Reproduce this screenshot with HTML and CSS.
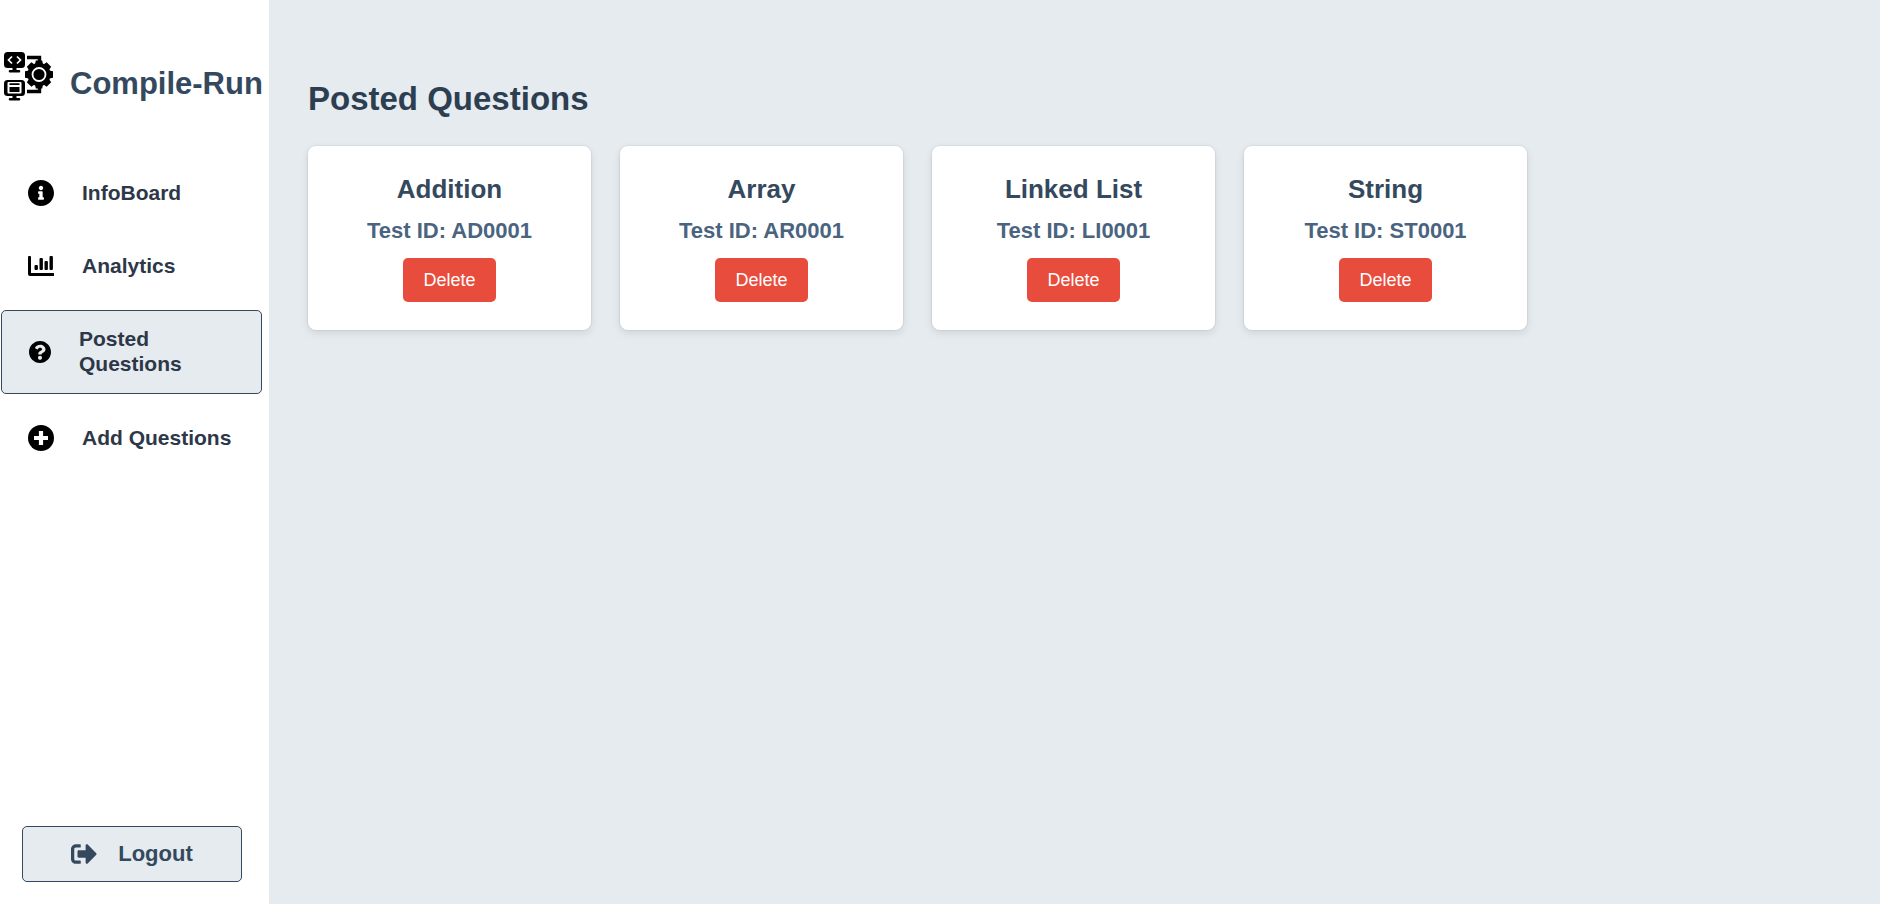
FILE: index.html
```html
<!DOCTYPE html>
<html lang="en">
<head>
<meta charset="utf-8">
<meta name="viewport" content="width=device-width, initial-scale=1">
<title>Compile-Run</title>
<link rel="stylesheet" href="styles.css">
</head>
<body>
<div class="app">
  <aside class="sidebar">
    <div class="brand">
      <svg class="brand-logo" viewBox="0 0 50 50" aria-hidden="true">
        <rect x="0" y="0" width="21" height="16" rx="3.5"/>
        <path d="M8.5 15h4v3h2.500a1.300 1.300 0 0 1 0 2.600h-9a1.300 1.300 0 0 1 0-2.600h2.500z"/>
        <path d="M8 4.500L4.500 8L8 11.500M13 4.500L16.500 8L13 11.500" fill="none" stroke="#fff" stroke-width="1.700"/>
        <rect x="0" y="28" width="21" height="16" rx="3.500"/>
        <path d="M8.500 43h4v3h2.500a1.300 1.300 0 0 1 0 2.600h-9a1.300 1.300 0 0 1 0-2.600h2.500z"/>
        <rect x="3.500" y="30" width="14" height="11.500" rx="1" fill="#fff"/>
        <path d="M5.500 31.300h10v1.700h-10zM5.500 35h10v5h-10z"/>
        <path d="M23 5.500h12.500v6M23 39.500h12.500v-6" fill="none" stroke="#000" stroke-width="3.400"/>
        <g transform="translate(35 22.500)">
          <circle r="11.500"/>
          <path d="M-3.200-14h6.400l1 5h-8.400zM-3.200 14h6.400l1-5h-8.400zM-14-3.200v6.400l5 1v-8.400zM14-3.200v6.400l-5 1v-8.400z"/>
          <path transform="rotate(45)" d="M-3.200-14h6.400l1 5h-8.400zM-3.200 14h6.400l1-5h-8.400zM-14-3.200v6.400l5 1v-8.400zM14-3.200v6.400l-5 1v-8.400z"/>
          <circle r="6.500" fill="none" stroke="#fff" stroke-width="1.800"/>
        </g>
      </svg>
      <h1 class="brand-name">Compile-Run</h1>
    </div>
    <nav class="nav">
      <a class="nav-item" href="#infoboard">
        <svg class="icon" viewBox="8 8 496 496" aria-hidden="true"><path d="M256 8C119.043 8 8 119.083 8 256c0 136.997 111.043 248 248 248s248-111.003 248-248C504 119.083 392.957 8 256 8zm0 110c23.196 0 42 18.804 42 42s-18.804 42-42 42-42-18.804-42-42 18.804-42 42-42zm56 254c0 6.627-5.373 12-12 12h-88c-6.627 0-12-5.373-12-12v-24c0-6.627 5.373-12 12-12h12v-64h-12c-6.627 0-12-5.373-12-12v-24c0-6.627 5.373-12 12-12h64c6.627 0 12 5.373 12 12v100h12c6.627 0 12 5.373 12 12v24z"/></svg>
        <span class="nav-label">InfoBoard</span>
      </a>
      <a class="nav-item" href="#analytics">
        <svg class="icon" viewBox="0 0 26 26" aria-hidden="true"><path d="M0 4a1 1 0 0 1 1-1h1a1 1 0 0 1 1 1v16h22.500a.5.5 0 0 1 .5.5v2a.5.5 0 0 1-.5.5H2a2 2 0 0 1-2-2z"/><rect x="6.500" y="12" width="3.400" height="5" rx="1"/><rect x="11.500" y="5" width="3.400" height="12" rx="1"/><rect x="16.500" y="8" width="3.400" height="9" rx="1"/><rect x="21.500" y="3" width="3.400" height="14" rx="1"/></svg>
        <span class="nav-label">Analytics</span>
      </a>
      <a class="nav-item active" href="#posted" aria-current="page">
        <svg class="icon" viewBox="8 8 496 496" aria-hidden="true"><path d="M504 256c0 136.997-111.043 248-248 248S8 392.997 8 256C8 119.083 119.043 8 256 8s248 111.083 248 248zM262.655 90c-54.497 0-89.255 22.957-116.549 63.758-3.536 5.286-2.353 12.415 2.715 16.258l34.699 26.310c5.205 3.947 12.621 3.008 16.665-2.122 17.864-22.658 30.113-35.797 57.303-35.797 20.429 0 45.698 13.148 45.698 32.958 0 14.976-12.363 22.667-32.534 33.976C247.128 238.528 216 254.941 216 296v4c0 6.627 5.373 12 12 12h56c6.627 0 12-5.373 12-12v-1.333c0-28.462 83.186-29.647 83.186-106.667 0-58.002-60.165-102-116.531-102zM256 338c-25.365 0-46 20.635-46 46 0 25.364 20.635 46 46 46s46-20.636 46-46c0-25.365-20.635-46-46-46z"/></svg>
        <span class="nav-label">Posted Questions</span>
      </a>
      <a class="nav-item" href="#add">
        <svg class="icon" viewBox="0 0 26 26" aria-hidden="true"><circle cx="13" cy="13" r="13"/><path d="M13 6v14M6 13h14" stroke="#fff" stroke-width="4.200"/></svg>
        <span class="nav-label">Add Questions</span>
      </a>
    </nav>
    <button class="logout" type="button">
      <svg class="icon" viewBox="0 0 512 512" aria-hidden="true"><path d="M497 273L329 441c-15 15-41 4.500-41-17v-96H152c-13.300 0-24-10.700-24-24v-96c0-13.300 10.700-24 24-24h136v-96c0-21.400 25.900-32 41-17l168 168c9.300 9.400 9.300 24.600 0 34zM192 436v-40c0-6.600-5.400-12-12-12H96c-17.700 0-32-14.300-32-32V160c0-17.700 14.300-32 32-32h84c6.600 0 12-5.400 12-12V76c0-6.600-5.400-12-12-12H96c-53 0-96 43-96 96v192c0 53 43 96 96 96h84c6.600 0 12-5.400 12-12z"/></svg>
      <span>Logout</span>
    </button>
  </aside>
  <main class="content">
    <h2 class="page-title">Posted Questions</h2>
    <div class="cards">
      <article class="card">
        <h3 class="card-title">Addition</h3>
        <p class="card-id">Test ID: AD0001</p>
        <button class="delete" type="button">Delete</button>
      </article>
      <article class="card">
        <h3 class="card-title">Array</h3>
        <p class="card-id">Test ID: AR0001</p>
        <button class="delete" type="button">Delete</button>
      </article>
      <article class="card">
        <h3 class="card-title">Linked List</h3>
        <p class="card-id">Test ID: LI0001</p>
        <button class="delete" type="button">Delete</button>
      </article>
      <article class="card">
        <h3 class="card-title">String</h3>
        <p class="card-id">Test ID: ST0001</p>
        <button class="delete" type="button">Delete</button>
      </article>
    </div>
  </main>
</div>
</body>
</html>
```
FILE: styles.css
```css
* {
  box-sizing: border-box;
  margin: 0;
}

body {
  font-family: "Liberation Sans", Arial, sans-serif;
  background: #e5ebef;
  color: #2c3e50;
}

.app {
  display: flex;
  min-height: 100vh;
}

.sidebar {
  flex: 0 0 269px;
  min-width: 0;
  display: flex;
  flex-direction: column;
  padding: 52px 7px 22px 1px;
  background: #fff;
}

.brand {
  display: flex;
  align-items: flex-start;
  gap: 16px;
  padding-left: 3px;
  margin-bottom: 62px;
}

.brand-logo {
  flex: none;
  width: 50px;
  height: 50px;
}

.brand-name {
  padding-top: 14px;
  font-size: 31px;
  line-height: 36px;
  white-space: nowrap;
  color: #34495e;
}

.nav {
  display: flex;
  flex-direction: column;
  gap: 15px;
}

.nav-item {
  display: flex;
  align-items: center;
  gap: 28px;
  padding: 16px 16px 16px 27px;
  border-radius: 5px;
  font-size: 21px;
  font-weight: bold;
  line-height: 25px;
  color: #2d3748;
  text-decoration: none;
}

.nav-label {
  padding-bottom: 1px;
}

.icon {
  flex: none;
  width: 26px;
  height: 26px;
}

.nav-item .icon {
  fill: #000;
}

.nav-item.active {
  padding-top: 15px;
  border: 1px solid #34495e;
  background: #e5ebef;
}

.nav-item.active .icon {
  width: 22px;
  height: 22px;
}

.logout {
  display: flex;
  align-items: center;
  justify-content: center;
  gap: 21px;
  margin: auto 20px 0 21px;
  padding: 14px;
  border: 1px solid #34495e;
  border-radius: 5px;
  background: #e5ebef;
  color: #34495e;
  fill: #34495e;
  font: bold 22px/26px "Liberation Sans", Arial, sans-serif;
}

.content {
  flex: 1;
  padding: 79px 41px 40px 39px;
}

.page-title {
  margin-bottom: 27px;
  font-size: 33px;
  line-height: 40px;
}

.cards {
  display: grid;
  grid-template-columns: repeat(auto-fill, minmax(260px, 1fr));
  gap: 29px;
}

.card {
  display: flex;
  flex-direction: column;
  align-items: center;
  padding: 28px;
  border-radius: 8px;
  background: #fff;
  box-shadow: 0 0 1px 1px rgba(0, 0, 0, 0.05), 0 3px 8px rgba(0, 0, 0, 0.1);
}

.card-title {
  margin-bottom: 14px;
  font-size: 26px;
  line-height: 30px;
  color: #34495e;
}

.card-id {
  margin-bottom: 14px;
  font-size: 22px;
  font-weight: bold;
  line-height: 26px;
  color: #4a6480;
}

.delete {
  padding: 11px 20px;
  border: 0;
  border-radius: 5px;
  background: #e74c3c;
  color: #fff;
  font: 18px/22px "Liberation Sans", Arial, sans-serif;
}
```
